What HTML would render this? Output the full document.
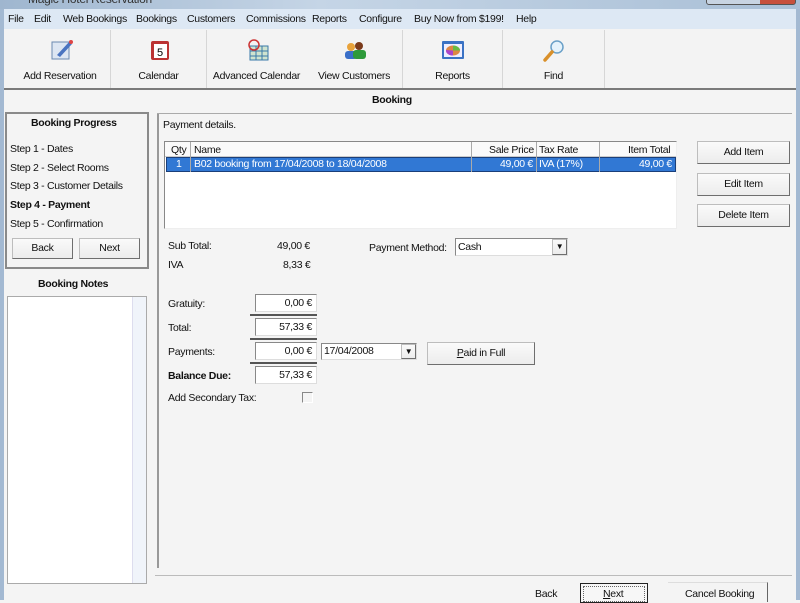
<!DOCTYPE html>
<html><head><meta charset="utf-8"><style>
*{margin:0;padding:0;box-sizing:border-box}
body{width:800px;height:600px;overflow:hidden;background:#f4f4f4;font-family:"Liberation Sans",sans-serif;font-size:10.5px;letter-spacing:-0.3px;color:#111;position:relative}
.a{position:absolute}
.t{position:absolute;white-space:nowrap}
.btn{position:absolute;background:linear-gradient(#fafafa,#ececec);border:1px solid #bdbdbd;border-right-color:#6e6e6e;border-bottom-color:#6e6e6e;text-align:center}
.box{position:absolute;background:#fff;border:1px solid #888;border-right-color:#ddd;border-bottom-color:#ddd;text-align:right;padding-right:4px}
.tb{position:absolute;top:30px;height:58px;text-align:center;border-right:1px solid #d6d6d6}
.tb span{position:absolute;left:0;right:0;top:40px}
</style></head><body>
<div class="a" style="left:0;top:0;width:800px;height:9px;background:linear-gradient(90deg,#9fb6cf,#c5d5e6 40%,#a9bfd6)"></div>
<div class="t" style="left:28px;top:-8px;font-size:12px;color:#333">Magic Hotel Reservation</div>
<div class="a" style="left:706px;top:-3px;width:90px;height:8px;border:1px solid #555;border-radius:3px;background:linear-gradient(90deg,#c8d4e2 60%,#c7503c 60%)"></div>
<div class="a" style="left:0;top:9px;width:4px;height:591px;background:#a3b9d2"></div>
<div class="a" style="left:796px;top:9px;width:4px;height:591px;background:#a3b9d2"></div>
<div class="a" style="left:4px;top:9px;width:792px;height:20px;background:#dde8f4"></div>
<div class="t" style="left:8px;top:13px">File</div>
<div class="t" style="left:34px;top:13px">Edit</div>
<div class="t" style="left:63px;top:13px">Web Bookings</div>
<div class="t" style="left:136px;top:13px">Bookings</div>
<div class="t" style="left:187px;top:13px">Customers</div>
<div class="t" style="left:246px;top:13px">Commissions</div>
<div class="t" style="left:312px;top:13px">Reports</div>
<div class="t" style="left:359px;top:13px">Configure</div>
<div class="t" style="left:414px;top:13px">Buy Now from $199!</div>
<div class="t" style="left:516px;top:13px">Help</div>
<div class="a" style="left:4px;top:29px;width:792px;height:60px;background:#f3f3f3"></div>
<div class="tb" style="left:10px;width:101px"><svg class="a" style="left:40px;top:8px" width="24" height="24"><rect x="2" y="4" width="17" height="17" fill="#dde6f2" stroke="#6b8ab0"/><path d="M7 17 L19 4 L22 6 L10 19 Z" fill="#4a74c0"/><circle cx="21" cy="4" r="2" fill="#d44"/></svg><span>Add Reservation</span></div>
<div class="tb" style="left:111px;width:96px"><svg class="a" style="left:38px;top:8px" width="22" height="24"><rect x="2" y="3" width="18" height="19" fill="#b33" rx="2"/><rect x="5" y="6" width="13" height="14" fill="#fff"/><text x="8" y="18" font-size="11" font-family="Liberation Sans">5</text></svg><span>Calendar</span></div>
<div class="tb" style="left:207px;width:99px;border:0"><svg class="a" style="left:39px;top:8px" width="24" height="24"><rect x="4" y="8" width="18" height="14" fill="#cfe3cf" stroke="#3a7aa8"/><path d="M4 13H22M4 18H22M10 8V22M16 8V22" stroke="#3a7aa8"/><circle cx="8" cy="7" r="5" fill="none" stroke="#c33" stroke-width="1.5"/></svg><span>Advanced Calendar</span></div>
<div class="tb" style="left:306px;width:97px"><svg class="a" style="left:36px;top:8px" width="26" height="24"><circle cx="9" cy="9" r="4" fill="#e8a23a"/><rect x="3" y="13" width="12" height="8" rx="3" fill="#3a6fc8"/><circle cx="17" cy="8" r="4" fill="#7a3a1a"/><rect x="11" y="12" width="13" height="9" rx="3" fill="#2e9a3a"/></svg><span>View Customers</span></div>
<div class="tb" style="left:403px;width:100px"><svg class="a" style="left:38px;top:9px" width="24" height="22"><rect x="1" y="2" width="22" height="18" fill="#3a72c4" rx="1"/><rect x="3" y="5" width="18" height="13" fill="#eef"/><ellipse cx="12" cy="11.5" rx="7" ry="5" fill="#d84"/><path d="M12 11.5 L19 11.5 A7 5 0 0 0 12 6.5Z" fill="#6b4"/><path d="M12 11.5 L5 11 A7 5 0 0 0 12 16.5Z" fill="#a4c"/></svg><span>Reports</span></div>
<div class="tb" style="left:503px;width:102px"><svg class="a" style="left:39px;top:8px" width="24" height="24"><circle cx="15" cy="9" r="6" fill="#e4f2fb" stroke="#6aa0c8" stroke-width="1.5"/><path d="M10 14 L3 22" stroke="#d9902a" stroke-width="3.5" stroke-linecap="round"/></svg><span>Find</span></div>
<div class="a" style="left:4px;top:88px;width:792px;height:2px;background:#7a7a7a"></div>
<div class="t" style="left:372px;top:94px;font-weight:bold">Booking</div>
<div class="a" style="left:5px;top:112px;width:144px;height:157px;border:2px solid #8a8a8a"></div>
<div class="t" style="left:31px;top:117px;font-weight:bold">Booking Progress</div>
<div class="t" style="left:10px;top:143px">Step 1 - Dates</div>
<div class="t" style="left:10px;top:162px">Step 2 - Select Rooms</div>
<div class="t" style="left:10px;top:180px">Step 3 - Customer Details</div>
<div class="t" style="left:10px;top:199px;font-weight:bold">Step 4 - Payment</div>
<div class="t" style="left:10px;top:218px">Step 5 - Confirmation</div>
<div class="btn" style="left:12px;top:238px;width:61px;height:21px;line-height:19px">Back</div>
<div class="btn" style="left:79px;top:238px;width:61px;height:21px;line-height:19px">Next</div>
<div class="t" style="left:38px;top:278px;font-weight:bold">Booking Notes</div>
<div class="a" style="left:7px;top:296px;width:140px;height:288px;background:#fff;border:1px solid #aaa"></div>
<div class="a" style="left:132px;top:297px;width:14px;height:286px;background:#f0f4fa;border-left:1px solid #dde"></div>
<div class="a" style="left:157px;top:113px;width:2px;height:455px;background:#999"></div>
<div class="a" style="left:157px;top:113px;width:635px;height:1px;background:#aaa"></div>
<div class="a" style="left:155px;top:575px;width:637px;height:1px;background:#bbb"></div>
<div class="t" style="left:163px;top:119px">Payment details.</div>
<div class="a" style="left:164px;top:141px;width:513px;height:88px;background:#fff;border:1px solid #888;border-right-color:#eee;border-bottom-color:#eee"></div>
<div class="a" style="left:165px;top:142px;width:511px;height:15px;background:#fafafa;border-bottom:1px solid #ccc"></div>
<div class="a" style="left:166px;top:157px;width:510px;height:15px;background:#3178d4;border:1px solid #1a3f7a"></div>
<div class="a" style="left:190px;top:142px;width:1px;height:30px;background:#aaa"></div>
<div class="a" style="left:471px;top:142px;width:1px;height:30px;background:#aaa"></div>
<div class="a" style="left:536px;top:142px;width:1px;height:30px;background:#aaa"></div>
<div class="a" style="left:599px;top:142px;width:1px;height:30px;background:#aaa"></div>
<div class="t" style="left:171px;top:144px">Qty</div>
<div class="t" style="left:194px;top:144px">Name</div>
<div class="t" style="left:489px;top:144px">Sale Price</div>
<div class="t" style="left:539px;top:144px">Tax Rate</div>
<div class="t" style="left:628px;top:144px">Item Total</div>
<div class="t" style="left:176px;top:158px;color:#fff">1</div>
<div class="t" style="left:194px;top:158px;color:#fff">B02 booking from 17/04/2008 to 18/04/2008</div>
<div class="t" style="left:500px;top:158px;color:#fff">49,00 €</div>
<div class="t" style="left:539px;top:158px;color:#fff">IVA (17%)</div>
<div class="t" style="left:639px;top:158px;color:#fff">49,00 €</div>
<div class="btn" style="left:697px;top:141px;width:93px;height:23px;line-height:21px">Add Item</div>
<div class="btn" style="left:697px;top:173px;width:93px;height:23px;line-height:21px">Edit Item</div>
<div class="btn" style="left:697px;top:204px;width:93px;height:23px;line-height:21px">Delete Item</div>
<div class="t" style="left:168px;top:240px">Sub Total:</div>
<div class="t" style="left:277px;top:240px">49,00 €</div>
<div class="t" style="left:168px;top:259px">IVA</div>
<div class="t" style="left:283px;top:259px">8,33 €</div>
<div class="t" style="left:369px;top:242px">Payment Method:</div>
<div class="a" style="left:455px;top:238px;width:113px;height:18px;background:#fff;border:1px solid #888;border-right-color:#ddd;border-bottom-color:#ddd"></div>
<div class="t" style="left:458px;top:241px">Cash</div>
<div class="btn" style="left:552px;top:239px;width:15px;height:16px;font-size:8px;line-height:14px">▼</div>
<div class="t" style="left:168px;top:298px">Gratuity:</div>
<div class="box" style="left:255px;top:294px;width:62px;height:18px;line-height:16px">0,00 €</div>
<div class="a" style="left:250px;top:314px;width:67px;height:2px;background:#555"></div>
<div class="t" style="left:168px;top:322px">Total:</div>
<div class="box" style="left:255px;top:318px;width:62px;height:18px;line-height:16px">57,33 €</div>
<div class="a" style="left:250px;top:338px;width:67px;height:2px;background:#555"></div>
<div class="t" style="left:168px;top:346px">Payments:</div>
<div class="box" style="left:255px;top:342px;width:62px;height:18px;line-height:16px">0,00 €</div>
<div class="a" style="left:250px;top:362px;width:67px;height:2px;background:#555"></div>
<div class="a" style="left:321px;top:343px;width:96px;height:17px;background:#fff;border:1px solid #888;border-right-color:#ddd;border-bottom-color:#ddd"></div>
<div class="t" style="left:324px;top:345px">17/04/2008</div>
<div class="btn" style="left:401px;top:344px;width:15px;height:15px;font-size:8px;line-height:13px">▼</div>
<div class="btn" style="left:427px;top:342px;width:108px;height:23px;line-height:21px"><u>P</u>aid in Full</div>
<div class="t" style="left:168px;top:370px;font-weight:bold">Balance Due:</div>
<div class="box" style="left:255px;top:366px;width:62px;height:18px;line-height:16px">57,33 €</div>
<div class="t" style="left:168px;top:392px">Add Secondary Tax:</div>
<div class="a" style="left:302px;top:392px;width:11px;height:11px;border:1px solid #888;border-right-color:#fff;border-bottom-color:#fff"></div>
<div class="t" style="left:535px;top:588px">Back</div>
<div class="a" style="left:580px;top:583px;width:68px;height:20px;border:1px solid #222;background:#f7f7f7"></div>
<div class="a" style="left:583px;top:586px;width:62px;height:16px;border:1px dotted #666"></div>
<div class="t" style="left:603px;top:588px"><u>N</u>ext</div>
<div class="a" style="left:668px;top:582px;width:100px;height:20px;border-right:1px solid #666;border-top:1px solid #ddd"></div>
<div class="t" style="left:685px;top:588px">Cancel Booking</div>
</body></html>
